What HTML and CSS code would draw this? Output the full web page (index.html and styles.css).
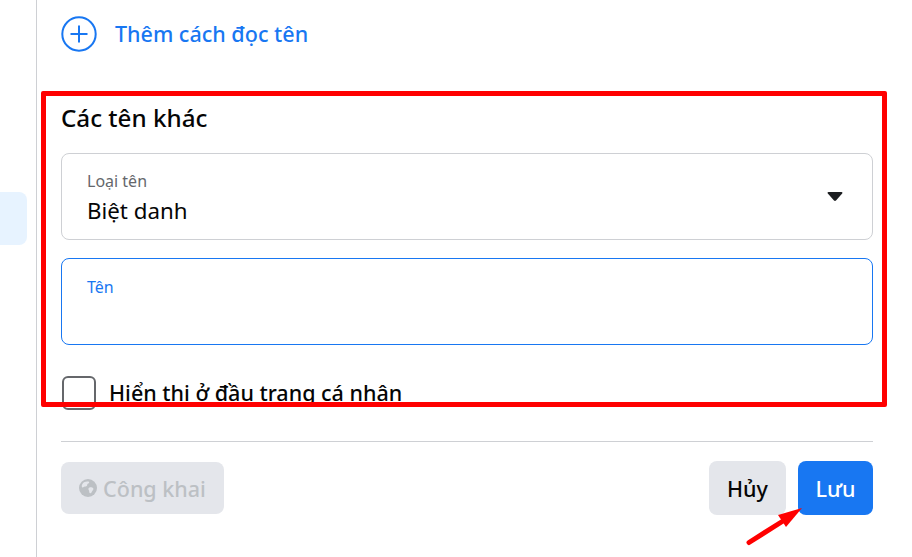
FILE: index.html

```html
<!DOCTYPE html>
<html lang="vi">
<head>
  <meta charset="UTF-8" />
  <title>Các tên khác</title>
  <link rel="stylesheet" href="styles.css">
</head>
<body>
  <aside class="rail">
    <div class="rail-pill"></div>
  </aside>

  <main class="content">
    <div class="add-row">
      <svg class="add-icon" width="36" height="36" viewBox="0 0 36 36" fill="none" stroke="#1877f2">
        <circle cx="18" cy="18" r="16.7" stroke-width="2"/>
        <path d="M18 9.5v17M9.5 18h17" stroke-width="2"/>
      </svg>
      <span class="add-text">Thêm cách đọc tên</span>
    </div>

    <h2 class="section-title">Các tên khác</h2>

    <div class="field">
      <div class="field-text">
        <div class="field-label">Loại tên</div>
        <div class="field-value">Biệt danh</div>
      </div>
      <svg class="caret" width="16" height="11" viewBox="0 0 16 11">
        <path d="M1.500 1h13c.9 0 1.300 1 .7 1.600L9 9.500c-.6.6-1.400.6-2 0L.8 2.600C.2 2 .6 1 1.500 1z" fill="#1c1e21"/>
      </svg>
    </div>

    <div class="field field-active">
      <div class="field-text">
        <div class="field-label">Tên</div>
      </div>
    </div>

    <label class="check-row">
      <span class="checkbox"></span>
      <span class="check-text">Hiển thị ở đầu trang cá nhân</span>
    </label>

    <hr class="divider" />

    <div class="actions">
      <button class="btn btn-public">
        <svg width="18" height="18" viewBox="0 0 18 18">
          <circle cx="9" cy="9" r="9" fill="#bcc0c4"/>
          <path d="M5 3.200c2-1 4-1 5-.4.6.9-.3 1.700-1.300 2-.7.7-.2 1.500-1 2.200-1 .8-2.500.3-3.400 1.200-.8.8-1.200-.1-1.600-1C2.900 5.400 3.700 4 5 3.200zM10.500 8.500c1.300-.5 3 0 3.700.8.600.9-.1 1.900-.8 2.500-.6.9-.8 2.300-2 2.500-1 .1-1.300-1.100-1.200-2 .1-.8-.8-1.300-.8-2.200 0-.8.400-1.300 1.100-1.600z" fill="#e4e6eb"/>
        </svg>
        Công khai
      </button>
      <div class="actions-right">
        <button class="btn btn-cancel">Hủy</button>
        <button class="btn btn-save">Lưu</button>
      </div>
    </div>
  </main>

  <div class="red-box"></div>
  <svg class="red-arrow" width="60" height="44" viewBox="0 0 60 44">
    <path d="M4 39.500 L38 18" stroke="#f00" stroke-width="5" stroke-linecap="round"/>
    <path d="M57 5 L33 12 L41 24 Z" fill="#f00"/>
  </svg>
</body>
</html>
```

FILE: styles.css

```css
html, body {
  height: 100%;
}
body {
  margin: 0;
  display: flex;
  background: #fff;
  color: #050505;
  font-family: "Noto Sans", "Open Sans", Arial, sans-serif;
  overflow: hidden;
}
.rail {
  width: 36px;
  border-right: 1px solid #ced0d4;
  padding-top: 192px;
  flex-shrink: 0;
}
.rail-pill {
  width: 27px;
  height: 53px;
  background: #e7f3ff;
  border-radius: 0 8px 8px 0;
}
.content {
  width: 812px;
  margin-left: 24px;
  padding-top: 16px;
}
.add-row {
  display: flex;
  align-items: center;
  gap: 18px;
  height: 36px;
}
.add-icon {
  display: block;
}
.add-text {
  color: #1877f2;
  font-size: 21.5px;
  font-weight: 500;
  padding-bottom: 2px;
}
.section-title {
  margin: 51px 0 20px;
  font-size: 24.200px;
  line-height: 30px;
  font-weight: 500;
}
.field {
  height: 85px;
  border: 1px solid #ced0d4;
  border-radius: 8px;
  display: flex;
  justify-content: space-between;
  align-items: center;
  padding: 0 29px 0 25px;
  margin-bottom: 18px;
}
.field-active {
  border-color: #1877f2;
  align-items: flex-start;
}
.field-text {
  padding-top: 7px;
}
.field-active .field-text {
  padding-top: 0;
}
.field-label {
  color: #65676b;
  font-size: 16px;
  line-height: 20px;
}
.field-active .field-label {
  color: #1877f2;
  margin-top: 18px;
}
.field-value {
  font-size: 22.300px;
  line-height: 36px;
  margin-top: 2px;
}
.caret {
  display: block;
}
.check-row {
  display: flex;
  align-items: center;
  gap: 13px;
  margin-top: 31px;
  margin-left: 1px;
  height: 34px;
}
.checkbox {
  width: 30px;
  height: 30px;
  border: 2px solid #65676b;
  border-radius: 6px;
}
.check-text {
  font-size: 21.500px;
  font-weight: 500;
  padding-bottom: 2px;
}
.divider {
  border: 0;
  border-top: 1px solid #ced0d4;
  margin: 31px 0 19px;
}
.actions {
  display: flex;
  justify-content: space-between;
  align-items: center;
}
.actions-right {
  display: flex;
  gap: 12px;
}
.btn {
  border: 0;
  border-radius: 8px;
  font-family: inherit;
  font-size: 21.500px;
  font-weight: 500;
  display: flex;
  align-items: center;
  justify-content: center;
}
.btn-public {
  width: 163px;
  height: 52px;
  gap: 6px;
  background: #e4e6eb;
  color: #bcc0c4;
}
.btn-cancel {
  width: 77px;
  height: 54px;
  background: #e4e6eb;
  color: #050505;
}
.btn-save {
  width: 75px;
  height: 54px;
  background: #1877f2;
  color: #fff;
}

/* annotations on top of the page */
.red-box {
  position: absolute;
  left: 41px;
  top: 91px;
  width: 836px;
  height: 306px;
  border: 5px solid #f00;
  border-radius: 2px;
}
.red-arrow {
  position: absolute;
  left: 745px;
  top: 503px;
}
```
